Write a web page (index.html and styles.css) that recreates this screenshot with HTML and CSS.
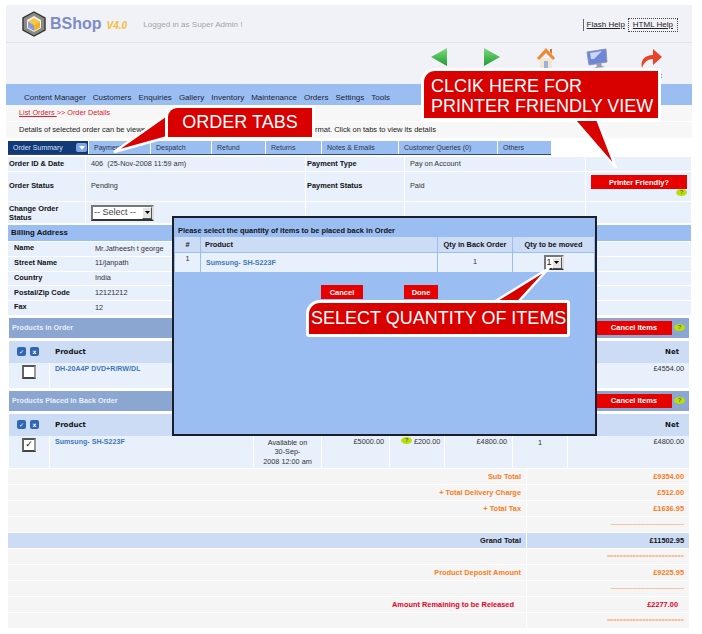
FILE: index.html
```html
<!DOCTYPE html>
<html lang="en">
<head>
<meta charset="utf-8">
<title>BShop - Order Details</title>
<link rel="stylesheet" href="styles.css">
</head>
<body>
<div class="page">
  <header class="top">
    <div class="brand">
      <svg class="logo" width="24" height="26" viewBox="0 0 24 26">
        <path d="M12 1 23 7v12l-11 6-11-6V7z" fill="#8a8a86" stroke="#333" stroke-width="1.4"/>
        <path d="M12 5 19 9v8l-7 4-7-4V9z" fill="#f2f2ee"/>
        <path d="M12 7 18 10.500 12 14 6 10.500z" fill="#f6c93c"/>
        <path d="M6 10.500 12 14v6l-6-3.500z" fill="#8d9ad8"/>
        <path d="M18 10.500 12 14v6l6-3.500z" fill="#f0b323"/>
      </svg>
      <span class="bshop">BShop</span>
      <span class="ver">V4.0</span>
      <span class="logged">Logged in as Super Admin !</span>
    </div>
    <div class="help">
      <a class="flash">Flash Help</a>
      <a class="html">HTML Help</a>
    </div>
  </header>
  <div class="toolbar">
    <svg class="tool" width="18" height="20" viewBox="0 0 18 20"><defs><linearGradient id="g1" x1="0" y1="0" x2="0" y2="1"><stop offset="0" stop-color="#7fdc7a"/><stop offset="1" stop-color="#1f9a33"/></linearGradient></defs><path d="M17 1v18L1 10z" fill="url(#g1)"/></svg>
    <svg class="tool t2" width="18" height="20" viewBox="0 0 18 20"><path d="M1 1v18l16-9z" fill="url(#g1)"/></svg>
    <svg class="tool t3" width="20" height="22" viewBox="0 0 20 22"><path d="M4 11h12v10H4z" fill="#efe8d2"/><path d="M8 14h4v7H8z" fill="#9db2d8"/><path d="M10 1 19 11l-2 2-7-7-7 7-2-2z" fill="#ec8a35"/><path d="M14 2h2v5l-2-2z" fill="#d9722a"/></svg>
    <svg class="tool t4" width="22" height="21" viewBox="0 0 22 21"><path d="M1 4 20 1l1 13-18 3z" fill="#6f86d8" stroke="#8c97b5"/><path d="M4 5l12-2-8 8-3 0z" fill="#c9d6f6"/><path d="M10 16l5-1 1 3 3 1-10 1 2-2z" fill="#9a9fad"/></svg>
    <svg class="tool t5" width="23" height="21" viewBox="0 0 23 21"><path d="M2 20C0 12 5 7 13 7V1l9 8-9 8v-6c-5 0-9 3-11 9z" fill="#e8432a"/></svg>
    <span class="logout">Logout</span>
  </div>
  <nav class="nav">
    <a>Content Manager</a><a>Customers</a><a>Enquiries</a><a>Gallery</a><a>Inventory</a><a>Maintenance</a><a>Orders</a><a>Settings</a><a>Tools</a>
  </nav>
  <div class="crumb"><a class="crumb-link">List Orders </a>&gt;&gt; Order Details</div>
  <div class="info"><span class="info-a">Details of selected order can be viewe</span><span class="info-b">rmat. Click on tabs to view its details</span></div>
  <div class="tabs">
    <div class="tab active">Order Summary<span class="chip"><svg width="6" height="4" viewBox="0 0 6 4"><path d="M0 0h6L3 4z" fill="#fff"/></svg></span></div>
    <div class="tab w-pay">Payment</div>
    <div class="tab w-des">Despatch</div>
    <div class="tab w-ref">Refund</div>
    <div class="tab w-ret">Returns</div>
    <div class="tab w-not">Notes &amp; Emails</div>
    <div class="tab w-cus">Customer Queries (0)</div>
    <div class="tab w-oth">Others</div>
  </div>

  <section class="summary">
    <div class="srow h1"><b>Order ID &amp; Date</b><span>406 &nbsp;(25-Nov-2008 11:59 am)</span><b>Payment Type</b><span>Pay on Account</span><span></span></div>
    <div class="srow h2"><b>Order Status</b><span>Pending</span><b>Payment Status</b><span>Paid</span>
      <span class="print-cell"><a class="redbtn print">Printer Friendly?</a><i class="q q-print">?</i></span></div>
    <div class="srow h3"><b class="label-wrap">Change Order<br>Status</b><span><span class="select"><span class="sel-text">-- Select --</span><span class="sel-btn"><svg width="5" height="3" viewBox="0 0 5 3"><path d="M0 0h5L2.500 3z" fill="#000"/></svg></span></span></span><b></b><span></span><span></span></div>
  </section>

  <section class="billing">
    <h2 class="bill-head">Billing Address</h2>
    <div class="brow"><b>Name</b><span>Mr.Jatheesh t george</span></div>
    <div class="brow"><b>Street Name</b><span>11/janpath</span></div>
    <div class="brow"><b>Country</b><span>India</span></div>
    <div class="brow"><b>Postal/Zip Code</b><span>12121212</span></div>
    <div class="brow"><b>Fax</b><span>12</span></div>
  </section>

  <section class="products first">
    <div class="phead"><h2>Products in Order</h2><a class="redbtn cancel">Cancel Items</a><i class="q">?</i></div>
    <div class="pcols"><span class="tools"><i class="sq">&#10003;</i><i class="sq">x</i></span><b>Product</b><b class="right">Net</b></div>
    <div class="prow r1">
      <span class="cb"><i class="box"></i></span>
      <a class="plink">DH-20A4P DVD+R/RW/DL</a><span></span><span></span><span></span><span></span><span></span>
      <span class="right">£4554.00</span>
    </div>
  </section>

  <section class="products">
    <div class="phead"><h2>Products Placed in Back Order</h2><a class="redbtn cancel">Cancel Items</a><i class="q">?</i></div>
    <div class="pcols"><span class="tools"><i class="sq">&#10003;</i><i class="sq">x</i></span><b>Product</b><b class="right">Net</b></div>
    <div class="prow r2">
      <span class="cb"><i class="box checked">&#10003;</i></span>
      <a class="plink">Sumsung- SH-S223F</a>
      <span class="center">Available on<br>30-Sep-<br>2008 12:00 am</span>
      <span class="right">£5000.00</span>
      <span class="disc"><i class="q q-in">?</i>£200.00</span>
      <span class="right">£4800.00</span>
      <span class="center">1</span>
      <span class="right">£4800.00</span>
    </div>
  </section>

  <section class="totals">
    <div class="trow or"><b>Sub Total</b><b>£9354.00</b></div>
    <div class="trow or"><b>+ Total Delivery Charge</b><b>£512.00</b></div>
    <div class="trow or"><b>+ Total Tax</b><b>£1636.95</b></div>
    <div class="trow rule"><span></span><span class="dash">--------------------------------------------</span></div>
    <div class="trow grand"><b>Grand Total</b><b>£11502.95</b></div>
    <div class="trow rule"><span></span><span class="dash eq">========================</span></div>
    <div class="trow or"><b>Product Deposit Amount</b><b>£9225.95</b></div>
    <div class="trow rule"><span></span><span class="dash">--------------------------------------------</span></div>
    <div class="trow red"><b>Amount Remaining to be Released</b><b>£2277.00</b></div>
    <div class="trow rule"><span></span><span class="dash eq">========================</span></div>
  </section>
</div>

<div class="modal">
  <h3>Please select the quantity of items to be placed back in Order</h3>
  <div class="mrow mhead"><b class="center">#</b><b>Product</b><b class="center">Qty in Back Order</b><b class="center">Qty to be moved</b></div>
  <div class="mrow mbody"><span class="center num">1</span><a class="plink mid">Sumsung- SH-S223F</a><span class="center mid">1</span>
    <span class="center mid"><span class="select small"><span class="sel-text">1</span><span class="sel-btn"><svg width="5" height="3" viewBox="0 0 5 3"><path d="M0 0h5L2.500 3z" fill="#000"/></svg></span></span></span></div>
  <div class="mactions"><a class="redbtn mcancel">Cancel</a><a class="redbtn mdone">Done</a></div>
</div>

<svg class="tails" width="702" height="634" viewBox="0 0 702 634">
  <path d="M168 114 114 152 168 137z" fill="#d90000" stroke="#fff" stroke-width="2.500"/>
  <path d="M571 116 616 168 596 116z" fill="#d90000" stroke="#fff" stroke-width="2.500"/>
  <path d="M494 302 549 268 518 302z" fill="#d90000" stroke="#fff" stroke-width="2.500"/>
</svg>
<div class="callout c-tabs">ORDER TABS</div>
<div class="callout c-print">CLCIK HERE FOR<br>PRINTER FRIENDLY VIEW</div>
<div class="callout c-qty">SELECT QUANTITY OF ITEMS</div>
</body>
</html>
```
FILE: styles.css
```css
* { box-sizing: border-box; }
html, body { margin: 0; padding: 0; background: #fff; }
body { width: 702px; height: 634px; overflow: hidden; position: relative; font: 7.300px/1.2 "Liberation Sans", Arial, sans-serif; color: #333; }
b { font: bold 7.400px/1.2 "Liberation Sans", Arial, sans-serif; color: #111; }
a { text-decoration: none; }
h2, h3 { margin: 0; }

.page { padding: 5px 10px 0 6px; }

.top { height: 38px; background: #f1f2f7; border-bottom: 1px solid #e3e4e9; display: flex; justify-content: space-between; padding: 6px 14px 0 16px; }
.brand { display: flex; align-items: center; height: 26px; }
.logo { display: block; }
.bshop { font: bold 16px "Liberation Sans", Arial, sans-serif; color: #7d8cc6; margin-left: 4px; }
.ver { font: italic bold 10px "Liberation Sans", Arial, sans-serif; color: #f4bd3a; margin-left: 5px; margin-top: 2px; }
.logged { font-size: 8.100px; color: #a3a3a8; margin-left: 16px; margin-top: 2px; }
.help { display: flex; align-items: center; height: 15px; margin-top: 6px; font-size: 8px; }
.help a { color: #222; text-decoration: underline; }
.flash { border-left: 1px solid #666; padding-left: 3px; height: 12px; line-height: 12px; }
.html { border: 1px dotted #444; margin-left: 3px; padding: 0 4px; height: 14px; line-height: 12px; }

.toolbar { height: 41px; background: #f1f2f7; display: flex; align-items: flex-start; padding: 4px 0 0 424px; position: relative; }
.tool { display: block; flex: none; }
.t2 { margin-left: 35px; }
.t3 { margin-left: 35px; }
.t4 { margin-left: 30px; margin-top: 1px; }
.t5 { margin-left: 32px; margin-top: 1px; }
.logout { position: absolute; right: 30px; top: 28px; font-size: 8px; color: #666; }

.nav { height: 21px; background: #9bbef2; display: flex; gap: 7px; padding: 8px 0 0 18px; font-size: 8px; line-height: 11px; color: #1c2433; }

.crumb { height: 17px; background: #f7f7f7; border-bottom: 1px solid #fff; padding: 3px 0 0 13px; color: #e0202c; line-height: 10px; }
.crumb-link { color: #e0202c; text-decoration: underline; }
.info { height: 16px; background: #f7f7f7; padding: 3px 0 0 13px; line-height: 10px; color: #222; white-space: nowrap; display: flex; font-size: 7.500px; }
.info-a { width: 296px; }

.tabs { display: flex; gap: 1px; margin: 3px 0 0 2px; height: 14px; width: 543px; border-bottom: 1px solid #334b70; font-size: 7px; }
.tab { background: #9bbef2; color: #27354d; padding: 2px 0 0 5px; line-height: 10px; height: 13px; }
.tab.active { width: 80px; background: #123a78; color: #d4e0f5; position: relative; }
.chip { position: absolute; right: 1px; top: 2px; width: 11px; height: 9px; background: #7ea6e4; border-radius: 2px; display: flex; align-items: center; justify-content: center; }
.w-pay { width: 61px; } .w-des { width: 60px; } .w-ref { width: 53px; } .w-ret { width: 55px; }
.w-not { width: 76px; } .w-cus { width: 98px; } .w-oth { flex: 1; }

.summary { margin: 2px 0 0 2px; width: 683px; display: grid; gap: 1px; }
.srow { display: grid; grid-template-columns: 77px 219px 98px 180px 1fr; gap: 1px; }
.srow > * { background: #e8f0fb; padding-left: 1px; display: flex; align-items: center; }
.srow > span { padding-left: 5px; }
.h1 { height: 14px; }
.h2 { height: 29px; }
.h3 { height: 21px; }
.srow.h3 > .label-wrap { display: block; line-height: 9px; padding-top: 2px; }
.print-cell { position: relative; }
.redbtn { display: flex; align-items: center; justify-content: center; background: #e60000; color: #fff; font: bold 7.500px "Liberation Sans", Arial, sans-serif; }
.print { position: absolute; left: 5px; top: 3px; width: 96px; height: 14px; }
.q { display: flex; align-items: center; justify-content: center; width: 11px; height: 7px; border-radius: 50%; background: #b9e000; color: #667; font: bold 6px/7px "Liberation Sans", Arial, sans-serif; flex: none; }
.q-print { position: absolute; left: 90px; top: 17px; }

.select { display: inline-flex; align-items: center; width: 63px; height: 16px; border: 2px solid; border-color: #777 #ddd #333 #777; background: #fff; font-size: 9px; color: #444; }
.sel-text { flex: 1; padding-left: 1px; white-space: nowrap; }
.sel-btn { width: 10px; height: 12px; background: #e4e4e4; border: 1px solid; border-color: #fff #555 #555 #fff; display: flex; align-items: center; justify-content: center; }
.select.small { width: 20px; height: 15px; }
.select.small .sel-text { color: #222; }

.billing { margin: 2px 0 0 2px; width: 683px; display: grid; gap: 1px; }
.bill-head { height: 16px; background: #9bbef2; font: bold 7.800px/16px "Liberation Sans", Arial, sans-serif; color: #111; padding-left: 3px; }
.brow { height: 13.750px; background: #e8f0fb; display: grid; grid-template-columns: 81px 1fr; align-items: center; padding-left: 6px; }

.products { margin: 3px 0 0 3px; width: 680px; }
.products.first { margin-top: 3px; }
.phead { height: 20px; background: #8ba7d1; display: flex; align-items: center; padding: 0 4px 0 3px; }
.phead h2 { font: bold 7.200px "Liberation Sans", Arial, sans-serif; color: #e8eef8; flex: 1; }
.cancel { width: 76px; height: 14px; margin-right: 2px; }
.pcols { height: 22px; margin-top: 3px; background: #ccdcf5; display: grid; grid-template-columns: 41px 1fr auto; align-items: center; padding-right: 5px; }
.pcols b { padding-left: 5px; font: bold 7px "DejaVu Sans", Verdana, sans-serif; }
.tools { display: flex; gap: 4px; padding-left: 8px; }
.sq { width: 9px; height: 9px; border-radius: 2px; background: #2f66b4; color: #fff; font: bold 6px/9px "DejaVu Sans", sans-serif; text-align: center; }
.prow { display: grid; grid-template-columns: 40px 203px 67px 67px 54px 67px 54px 1fr; gap: 1px; background: #fff; }
.prow > * { background: #e8f0fb; padding-top: 2px; }
.r1 { height: 25px; }
.r2 { height: 32px; }
.cb { display: flex; justify-content: center; }
.box { width: 14px; height: 14px; border: 2px solid; border-color: #555 #999 #444 #666; background: #fff; font: bold 9px/9px "DejaVu Sans", sans-serif; color: #111; text-align: center; }
.plink { color: #3f77bd; font: bold 7.100px "Liberation Sans", Arial, sans-serif; padding-left: 5px; }
.center { text-align: center; }
.right { text-align: right; padding-right: 5px; }
.prow .center { line-height: 9.500px; }
.disc { display: flex; align-items: flex-start; gap: 2px; padding-left: 11px; white-space: nowrap; }
.q-in { margin-top: -1px; }
.prow .right { color: #333; }

.totals { margin: 1px 0 0 2px; width: 681px; display: grid; gap: 1px; }
.trow { height: 15px; display: grid; grid-template-columns: 518px 1fr; gap: 1px; background: #fff; align-items: stretch; }
.trow > * { background: #f5f5f5; text-align: right; padding-right: 5px; line-height: 15px; }
.or b { color: #fb7c1c; }
.grand > * { background: #ccdcf5; }
.red b { color: #e6001e; }
.red b:first-child { padding-right: 12px; }
.red b:last-child { padding-right: 11px; }
.dash { color: #f49a55; font: bold 5px/15px "Liberation Sans", Arial, sans-serif; white-space: nowrap; overflow: hidden; }
.dash.eq { font-size: 5.500px; }

.modal { position: absolute; left: 172px; top: 216px; width: 425px; height: 220px; background: #9bbef2; border: 2px solid #1a1f2a; padding: 8px 1px 0 1px; }
.modal h3 { font: bold 7.450px/10px "Liberation Sans", Arial, sans-serif; color: #111; padding-left: 3px; height: 11px; }
.mrow { display: grid; grid-template-columns: 25px 236px 74px 1fr; gap: 1px; }
.mhead { height: 15px; }
.mhead > * { background: #ccdcf5; line-height: 15px; padding-left: 4px; }
.mhead .center { padding-left: 0; }
.mbody { height: 19px; margin-top: 1px; }
.mbody > * { background: #e8f0fb; }
.num { padding-top: 2px; }
.mid { display: flex; align-items: center; }
.mbody .center.mid { justify-content: center; }
.mactions { position: relative; }
.mcancel, .mdone { position: absolute; top: 13px; height: 14px; }
.mcancel { left: 146px; width: 42px; }
.mdone { left: 229px; width: 34px; }

.tails { position: absolute; left: 0; top: 0; pointer-events: none; }
.callout { position: absolute; background: #d90000; color: #fff; border: 3px solid #fff; font-family: "Liberation Sans", Arial, sans-serif; font-size: 18px; white-space: nowrap; }
.c-tabs { left: 165px; top: 105px; width: 150px; height: 35px; line-height: 29px; text-align: center; border-top-left-radius: 12px; }
.c-print { left: 421px; top: 68px; width: 240px; height: 53px; padding: 5px 0 0 7px; line-height: 20px; border-top-left-radius: 14px; }
.c-qty { left: 306px; top: 300px; width: 264px; height: 37px; line-height: 31px; padding-left: 2px; border-radius: 14px 3px 3px 3px; }
```
